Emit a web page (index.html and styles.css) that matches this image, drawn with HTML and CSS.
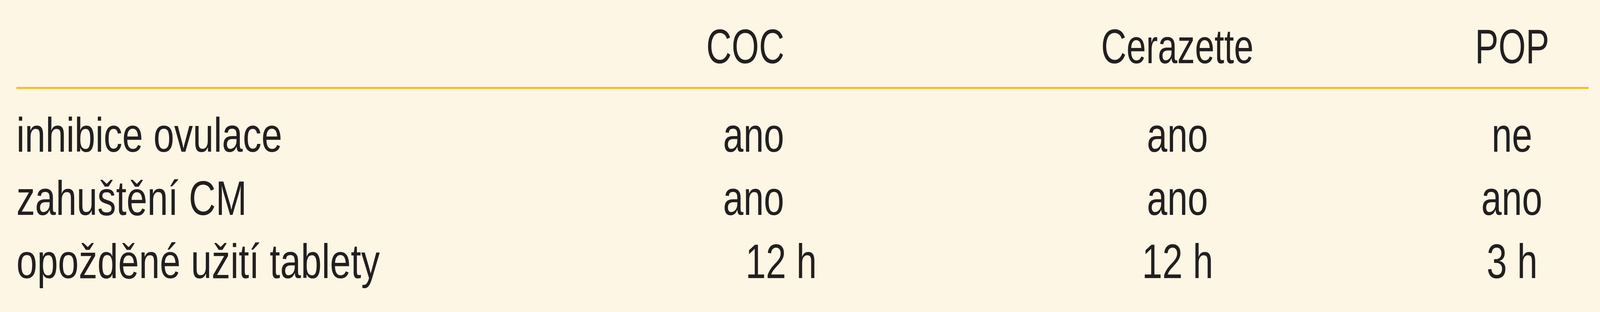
FILE: index.html
```html
<!DOCTYPE html>
<html lang="cs">
<head>
<meta charset="utf-8">
<title>Srovnání</title>
<link rel="stylesheet" href="styles.css">
</head>
<body>
<div class="sheet">
  <div class="grid">
    <div class="row head">
      <div class="cell label"></div>
      <div class="cell"><span class="txt">COC</span></div>
      <div class="cell"><span class="txt">Cerazette</span></div>
      <div class="cell"><span class="txt">POP</span></div>
    </div>
    <div class="row first">
      <div class="cell label"><span class="txt">inhibice ovulace</span></div>
      <div class="cell nudge-s"><span class="txt">ano</span></div>
      <div class="cell"><span class="txt">ano</span></div>
      <div class="cell"><span class="txt">ne</span></div>
    </div>
    <div class="row">
      <div class="cell label"><span class="txt">zahuštění CM</span></div>
      <div class="cell nudge-s"><span class="txt">ano</span></div>
      <div class="cell"><span class="txt">ano</span></div>
      <div class="cell"><span class="txt">ano</span></div>
    </div>
    <div class="row">
      <div class="cell label"><span class="txt">opožděné užití tablety</span></div>
      <div class="cell nudge-l"><span class="txt">12 h</span></div>
      <div class="cell"><span class="txt">12 h</span></div>
      <div class="cell"><span class="txt">3 h</span></div>
    </div>
  </div>
</div>
</body>
</html>
```

FILE: styles.css
```css
html, body {
  margin: 0;
  padding: 0;
  background: #fdf6e4;
  overflow: hidden;
}

.sheet {
  width: 100%;
  height: 800px;
  box-sizing: border-box;
  padding: 38px 0.7045vw 0 1.0227vw;
  background: #fdf6e4;
  color: #231f20;
  font-family: "Liberation Sans", Arial, sans-serif;
  font-size: 125px;
}

.grid {
  display: grid;
  grid-template-columns: 1526fr 958fr 1418fr 422fr;
}

.row {
  display: contents;
}

.cell {
  min-width: 0;
  line-height: 162px;
  text-align: center;
  white-space: nowrap;
}

.cell.label {
  text-align: left;
}

.txt {
  display: inline-block;
  transform: scaleX(0.75);
  transform-origin: center;
}

.label .txt {
  transform: scaleX(0.765);
  transform-origin: left center;
}

.head .txt {
  transform: scaleX(0.72);
}

.head .cell {
  padding-bottom: 23px;
  border-bottom: 5px solid #fdb827;
}

.first .cell {
  padding-top: 37px;
}

.nudge-s {
  padding-left: 1.045vw;
}

.nudge-l {
  padding-left: 4.4545vw;
}
```
